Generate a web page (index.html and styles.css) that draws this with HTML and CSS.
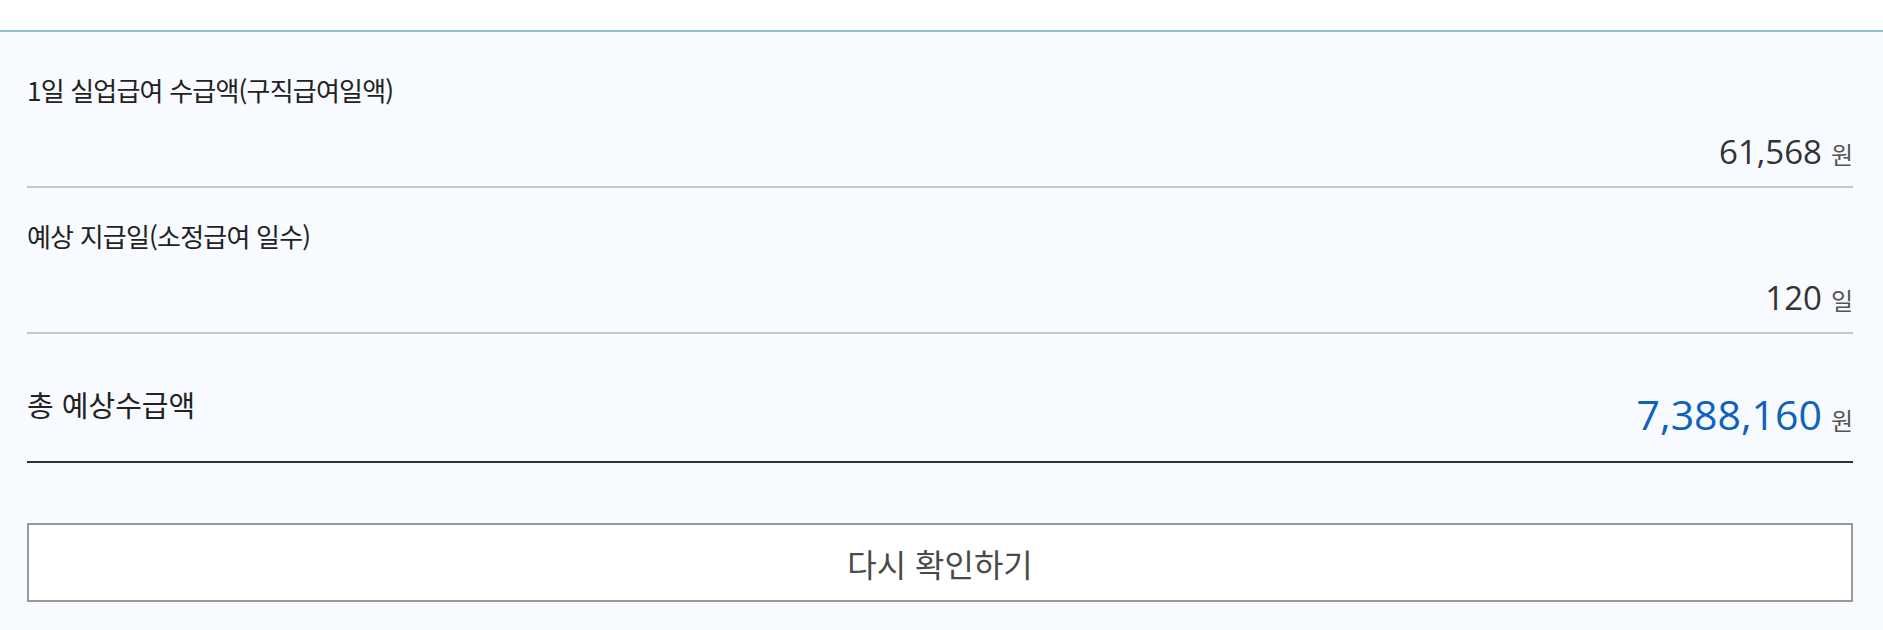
FILE: index.html
```html
<!DOCTYPE html>
<html lang="ko">
<head>
  <meta charset="UTF-8">
  <title>실업급여 계산 결과</title>
  <link rel="stylesheet" href="styles.css">
</head>
<body>
  <div class="top"></div>
  <div class="result">
    <div class="row">
      <div class="label">1일 실업급여 수급액(구직급여일액)</div>
      <div class="value"><span class="num">61,568</span><span class="unit">원</span></div>
    </div>
    <div class="row">
      <div class="label">예상 지급일(소정급여 일수)</div>
      <div class="value"><span class="num">120</span><span class="unit">일</span></div>
    </div>
    <div class="row total">
      <div class="label">총 예상수급액</div>
      <div class="value"><span class="num">7,388,160</span><span class="unit">원</span></div>
    </div>
    <button class="retry" type="button">다시 확인하기</button>
  </div>
</body>
</html>
```

FILE: styles.css
```css
body { margin: 0; font-family: "Noto Sans CJK KR", sans-serif; color: #333; background: #f7fafe; }
.top { height: 30px; background: #fff; }
.result { background: #f7fafe; border-top: 2px solid #8fc0d6; padding: 10px 30px 28px 27px; }

.row { border-bottom: 2px solid #c8c8cc; padding: 31px 0 14px; }
.label { font-size: 26px; line-height: 34px; letter-spacing: -0.8px; color: #222; }
.value { display: flex; justify-content: flex-end; align-items: baseline; margin-top: 25px; white-space: nowrap; }
.num { font-family: "Open Sans", sans-serif; font-size: 33px; line-height: 40px; color: #333; }
.unit { font-size: 24px; line-height: 24px; color: #555; margin-left: 9px; }

.row.total { display: flex; justify-content: space-between; align-items: flex-start; border-bottom-color: #333; padding: 56px 0 23px; }
.row.total .label { font-size: 29px; letter-spacing: 0; margin-top: -3px; }
.row.total .value { margin-top: 0; }
.row.total .num { font-size: 41px; line-height: 48px; color: #0e62bd; }

.retry { display: block; width: 100%; height: 79px; margin-top: 60px; background: #fff; border: 2px solid #999; font-family: "Noto Sans CJK KR", sans-serif; font-size: 32px; color: #4a4a4a; cursor: pointer; }
```
